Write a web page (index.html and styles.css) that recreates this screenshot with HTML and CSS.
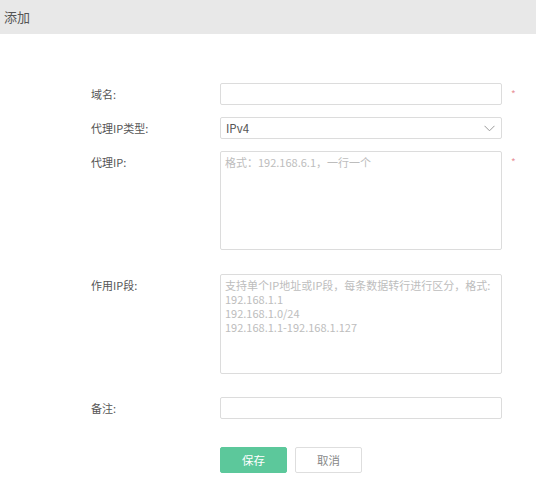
FILE: index.html
```html
<!DOCTYPE html>
<html lang="zh-CN">
<head>
<meta charset="utf-8">
<title>添加</title>
<link rel="stylesheet" href="styles.css">
</head>
<body>
<div class="header">添加</div>
<form class="form">
  <div class="row">
    <label class="label">域名:</label>
    <input class="control" type="text">
    <span class="req">*</span>
  </div>
  <div class="row">
    <label class="label">代理IP类型:</label>
    <div class="control select">
      <span>IPv4</span>
      <svg class="chev" width="11" height="7" viewBox="0 0 11 7"><polyline points="0.5,0.8 5.5,5.8 10.5,0.8" fill="none" stroke="#999" stroke-width="1"/></svg>
    </div>
    <span class="req req-hidden">*</span>
  </div>
  <div class="row top gap-lg">
    <label class="label">代理IP:</label>
    <textarea class="control area a1" placeholder="格式：192.168.6.1，一行一个"></textarea>
    <span class="req">*</span>
  </div>
  <div class="row top gap-lg2">
    <label class="label">作用IP段:</label>
    <textarea class="control area a2" placeholder="支持单个IP地址或IP段，每条数据转行进行区分，格式:&#10;192.168.1.1&#10;192.168.1.0/24&#10;192.168.1.1-192.168.1.127"></textarea>
  </div>
  <div class="row gap-btn">
    <label class="label">备注:</label>
    <input class="control" type="text">
  </div>
  <div class="actions">
    <button type="button" class="btn save">保存</button>
    <button type="button" class="btn cancel">取消</button>
  </div>
</form>
</body>
</html>
```
FILE: styles.css
```css
* { box-sizing: border-box; }
body {
  margin: 0;
  font-family: "Noto Sans CJK SC", "Noto Sans", sans-serif;
  font-size: 12px;
  color: #444;
  background: #fff;
}
.header {
  height: 34px;
  line-height: 33px;
  padding-left: 4px;
  background: #e8e8e8;
  font-size: 13px;
  color: #555;
}
.form {
  padding: 49px 0 0 91px;
}
.row {
  display: flex;
  align-items: center;
  margin-bottom: 12px;
}
.row.top { align-items: flex-start; }
.row.gap-lg { margin-bottom: 24px; }
.row.gap-lg2 { margin-bottom: 23px; }
.row.gap-btn { margin-bottom: 28px; }
.label {
  width: 129px;
  flex: none;
  line-height: 22px;
  font-size: 11px;
  color: #555;
}
.control {
  width: 282px;
  height: 22px;
  border: 1px solid #dcdcdc;
  border-radius: 2px;
  background: #fff;
  font-family: inherit;
  font-size: 11.5px;
  color: #555;
  padding: 0 4px;
  outline: none;
}
.select {
  display: flex;
  align-items: center;
  justify-content: space-between;
  padding: 0 6px 0 5px;
}
.select span { line-height: 20px; }
.chev { display: block; }
.area {
  resize: none;
  padding: 3px 4px;
  line-height: 14px;
  font-size: 11px;
}
.a1 { height: 99px; }
.a2 { height: 100px; }
.area::placeholder { color: #bdbdbd; }
.req {
  margin-left: 9px;
  color: #e8949a;
  font-size: 10px;
  line-height: 22px;
}
.req-hidden { visibility: hidden; }
.actions {
  display: flex;
  gap: 8px;
  padding-left: 129px;
}
.btn {
  width: 67px;
  height: 26px;
  border-radius: 2px;
  font-family: inherit;
  font-size: 11.5px;
  cursor: pointer;
}
.save {
  background: #5cc89b;
  border: 1px solid #5cc89b;
  color: #fff;
}
.cancel {
  background: #fff;
  border: 1px solid #dedede;
  color: #888;
}
```
